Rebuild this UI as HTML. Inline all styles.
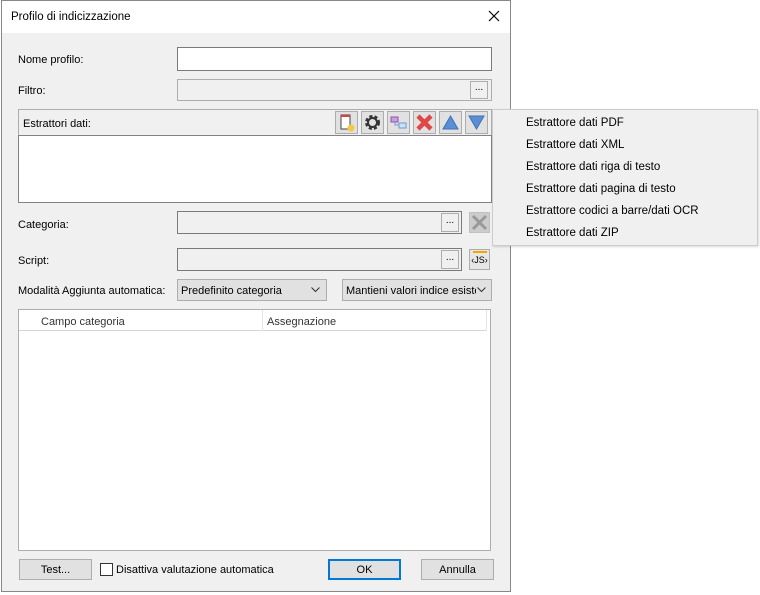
<!DOCTYPE html>
<html><head><style>
*{box-sizing:border-box}
body{margin:0;width:760px;height:595px;background:#fff;font-family:"Liberation Sans",sans-serif;font-size:11px;color:#000;position:relative;overflow:hidden}
.a{position:absolute}
.dlg{left:1px;top:0;width:510px;height:592px;background:#f0f0f0;border:1px solid #888}
.title{left:2px;top:1px;width:508px;height:32px;background:#fff}
.inp{border:1px solid #7a7a7a;background:#fff}
.dis{border:1px solid #adadad;background:#f0f0f0}
.dot{border:1px solid #adadad;background:#f0f0f0;font-size:10px;text-align:center;line-height:12px}
.tb{width:23px;height:23px;border:1px solid #adadad;background:#e1e1e1}
.btn{border:1px solid #adadad;background:#e1e1e1;text-align:center;line-height:21px}
.mi{left:526px;font-size:11.5px}
</style></head><body>
<div class="a dlg"></div>
<div class="a title"></div>
<div class="a" style="left:11px;top:11px;font-size:11.5px">Profilo di indicizzazione</div>
<svg class="a" style="left:488px;top:10px" width="12" height="12"><path d="M1 1L11 11M11 1L1 11" stroke="#000" stroke-width="1.2"/></svg>

<div class="a" style="left:18px;top:54px">Nome profilo:</div>
<div class="a inp" style="left:177px;top:47px;width:315px;height:24px"></div>
<div class="a" style="left:18px;top:85px">Filtro:</div>
<div class="a dis" style="left:177px;top:79px;width:315px;height:22px"></div>
<div class="a dot" style="left:470px;top:81px;width:18px;height:18px">...</div>

<div class="a" style="left:18px;top:109px;width:474px;height:27px;border:1px solid #adadad;border-bottom:none;background:#f0f0f0"></div>
<div class="a" style="left:23px;top:118px">Estrattori dati:</div>
<div class="a inp" style="left:18px;top:135px;width:474px;height:68px;border-color:#828282"></div>
<div class="a tb" style="left:335px;top:111px"><svg width="21" height="21"><rect x="5" y="3" width="9" height="14" fill="#fff" stroke="#444"/><rect x="5" y="3" width="9" height="2" fill="#e04040"/><circle cx="15" cy="16" r="3.5" fill="#f5c842"/></svg></div>
<div class="a tb" style="left:361px;top:111px"><svg width="21" height="21"><circle cx="10.5" cy="10.5" r="6" fill="none" stroke="#333" stroke-width="3" stroke-dasharray="3 2"/><circle cx="10.5" cy="10.5" r="4.5" fill="none" stroke="#333" stroke-width="2"/></svg></div>
<div class="a tb" style="left:387px;top:111px"><svg width="21" height="21"><rect x="3" y="5" width="7" height="5" fill="#c9a0dc" stroke="#9050b0"/><rect x="11" y="11" width="7" height="5" fill="#cde0f5" stroke="#6a9ad0"/><path d="M7 10V13H11" stroke="#6a9ad0" fill="none"/></svg></div>
<div class="a tb" style="left:413px;top:111px"><svg width="21" height="21"><path d="M4 4L17 17M17 4L4 17" stroke="#e04848" stroke-width="4.5"/></svg></div>
<div class="a tb" style="left:439px;top:111px"><svg width="21" height="21"><path d="M3 17L10.5 4L18 17Z" fill="#5b8fd4" stroke="#3f70b8"/></svg></div>
<div class="a tb" style="left:465px;top:111px"><svg width="21" height="21"><path d="M3 4L10.5 17L18 4Z" fill="#5b8fd4" stroke="#3f70b8"/></svg></div>

<div class="a" style="left:18px;top:219px">Categoria:</div>
<div class="a dis" style="left:177px;top:211px;width:285px;height:23px;border-color:#7a7a7a"></div>
<div class="a dot" style="left:441px;top:213px;width:18px;height:19px;line-height:14px">...</div>
<div class="a" style="left:469px;top:212px;width:21px;height:21px;background:#ccc;border:1px solid #c0c0c0"><svg width="19" height="19"><path d="M3 3L16 16M16 3L3 16" stroke="#999" stroke-width="3"/></svg></div>

<div class="a" style="left:18px;top:255px">Script:</div>
<div class="a dis" style="left:177px;top:248px;width:285px;height:23px;border-color:#7a7a7a"></div>
<div class="a dot" style="left:441px;top:250px;width:18px;height:19px;line-height:14px">...</div>
<div class="a tb" style="left:469px;top:249px;width:21px;height:21px;font-size:9px;text-align:center;line-height:20px;background:#e6e6e6"><div style="position:absolute;left:3px;top:1px;width:14px;height:2px;background:#f0a800"></div>‹JS›</div>

<div class="a" style="left:18px;top:285px">Modalità Aggiunta automatica:</div>
<div class="a btn" style="left:177px;top:279px;width:150px;height:22px;text-align:left;padding-left:3px;line-height:22px">Predefinito categoria</div>
<svg class="a" style="left:311px;top:287px" width="9" height="6"><path d="M0.5 0.5L4.5 4.5L8.5 0.5" stroke="#333" fill="none"/></svg>
<div class="a btn" style="left:342px;top:279px;width:150px;height:22px;text-align:left;padding-left:3px;line-height:22px;overflow:hidden;white-space:nowrap"><span style="display:inline-block;width:130px;overflow:hidden">Mantieni valori indice esistenti</span></div>
<svg class="a" style="left:477px;top:287px" width="9" height="6"><path d="M0.5 0.5L4.5 4.5L8.5 0.5" stroke="#333" fill="none"/></svg>

<div class="a" style="left:18px;top:309px;width:473px;height:242px;background:#fff;border:1px solid #adadad"></div>
<div class="a" style="left:19px;top:310px;width:468px;height:21px;border-bottom:1px solid #d5d5d5;background:#fff"></div>
<div class="a" style="left:262px;top:310px;width:1px;height:21px;background:#e5e5e5"></div>
<div class="a" style="left:486px;top:310px;width:1px;height:21px;background:#e5e5e5"></div>
<div class="a" style="left:41px;top:316px;color:#333">Campo categoria</div>
<div class="a" style="left:267px;top:316px;color:#333">Assegnazione</div>

<div class="a btn" style="left:19px;top:559px;width:73px;height:21px">Test...</div>
<div class="a" style="left:100px;top:563px;width:13px;height:13px;border:1px solid #333;background:#fff"></div>
<div class="a" style="left:116px;top:564px">Disattiva valutazione automatica</div>
<div class="a btn" style="left:328px;top:559px;width:73px;height:21px;border:2px solid #0078d7;line-height:19px">OK</div>
<div class="a btn" style="left:421px;top:559px;width:73px;height:21px">Annulla</div>

<div class="a" style="left:492px;top:109px;width:266px;height:137px;background:#f0f0f0;border:1px solid #ccc;box-shadow:1px 1px 2px rgba(0,0,0,.15)"></div>
<div class="a mi" style="top:117px">Estrattore dati PDF</div>
<div class="a mi" style="top:139px">Estrattore dati XML</div>
<div class="a mi" style="top:161px">Estrattore dati riga di testo</div>
<div class="a mi" style="top:183px">Estrattore dati pagina di testo</div>
<div class="a mi" style="top:205px">Estrattore codici a barre/dati OCR</div>
<div class="a mi" style="top:227px">Estrattore dati ZIP</div>
</body></html>
